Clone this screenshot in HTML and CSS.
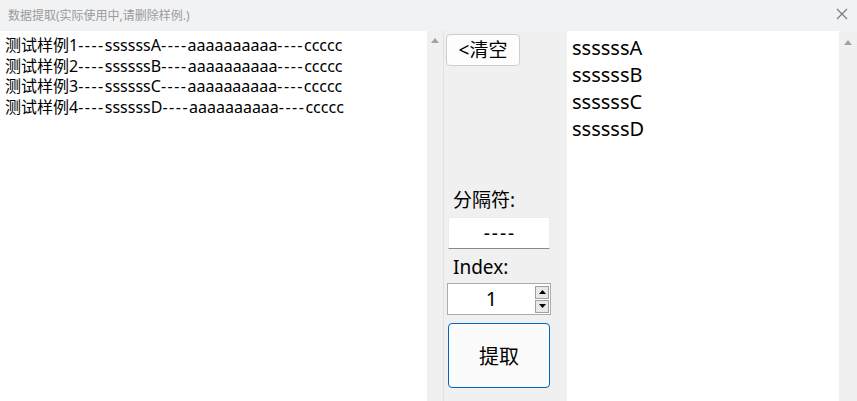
FILE: index.html
```html
<!DOCTYPE html>
<html lang="zh-CN">
<head>
<meta charset="utf-8">
<title>数据提取</title>
<link rel="stylesheet" href="styles.css">
</head>
<body>
<div class="window">
  <div class="titlebar">
    <span class="title">数据提取(实际使用中,请删除样例.)</span>
    <svg class="close" width="12" height="12" viewBox="0 0 12 12"><path d="M1 1 L11 11 M11 1 L1 11" stroke="#777" stroke-width="1.1" fill="none"/></svg>
  </div>
  <div class="content">
    <div class="textarea left">
      <div>测试样例1<span class="dash">----</span>ssssssA<span class="dash">----</span>aaaaaaaaaa<span class="dash">----</span>ccccc</div>
      <div>测试样例2<span class="dash">----</span>ssssssB<span class="dash">----</span>aaaaaaaaaa<span class="dash">----</span>ccccc</div>
      <div>测试样例3<span class="dash">----</span>ssssssC<span class="dash">----</span>aaaaaaaaaa<span class="dash">----</span>ccccc</div>
      <div>测试样例4<span class="dash">----</span>ssssssD<span class="dash">----</span>aaaaaaaaaa<span class="dash">----</span>ccccc</div>
    </div>
    <div class="scrollbar sb-left"><span class="arrow-up"></span></div>
    <div class="middle">
      <button class="btn clear">&lt;清空</button>
      <div class="label sep-label">分隔符:</div>
      <div class="input sep">----</div>
      <div class="label">Index:</div>
      <div class="numeric">
        <span class="num-value">1</span>
        <span class="spin">
          <span class="spin-btn"><svg width="7" height="4" viewBox="0 0 7 4"><path d="M0 4 L3.5 0 L7 4 Z" fill="#000"/></svg></span>
          <span class="spin-btn"><svg width="7" height="4" viewBox="0 0 7 4"><path d="M0 0 L3.5 4 L7 0 Z" fill="#000"/></svg></span>
        </span>
      </div>
      <button class="btn extract">提取</button>
    </div>
    <div class="textarea right">
      <div>ssssssA</div>
      <div>ssssssB</div>
      <div>ssssssC</div>
      <div>ssssssD</div>
    </div>
    <div class="scrollbar sb-right"><span class="arrow-up"></span></div>
  </div>
</div>
</body>
</html>
```

FILE: styles.css
```css
html, body {
  margin: 0;
  padding: 0;
}
body {
  width: 857px;
  height: 401px;
  overflow: hidden;
  font-family: "Noto Sans", "Noto Sans CJK SC", sans-serif;
  color: #000;
  background: #f0f0f0;
}
.window {
  display: flex;
  flex-direction: column;
  height: 401px;
}
.titlebar {
  height: 31px;
  flex: none;
  background: #f1f2f4;
  display: flex;
  align-items: center;
  justify-content: space-between;
  padding: 0 9px 0 8px;
  box-sizing: border-box;
}
.title {
  font-size: 12px;
  color: #9a9a9a;
  position: relative;
  top: -1px;
}
.close {
  display: block;
  position: relative;
  top: -2px;
}
.content {
  flex: 1;
  display: flex;
  min-height: 0;
}
.textarea {
  background: #fff;
  box-sizing: border-box;
  white-space: nowrap;
  overflow: hidden;
}
.left {
  width: 427px;
  flex: none;
  padding: 4px 0 0 5px;
  font-size: 16px;
  line-height: 20.7px;
}
.dash {
  letter-spacing: 1.5px;
}
.right {
  width: 272px;
  flex: none;
  padding: 3px 0 0 5px;
  font-size: 20px;
  line-height: 27px;
}
.scrollbar {
  background: #f0f0f0;
  flex: none;
  display: flex;
  justify-content: center;
  box-sizing: border-box;
}
.sb-left {
  width: 17px;
  border-right: 1px solid #e2e2e2;
}
.sb-right {
  width: 18px;
}
.arrow-up {
  width: 0;
  height: 0;
  margin-top: 7px;
  border-left: 4px solid transparent;
  border-right: 4px solid transparent;
  border-bottom: 5px solid #a3a3a3;
}
.sb-right .arrow-up {
  margin-top: 9px;
}
.middle {
  width: 123px;
  flex: none;
  background: #f0f0f0;
  display: flex;
  flex-direction: column;
  align-items: flex-start;
}
.btn {
  font-family: "Noto Sans", "Noto Sans CJK SC", sans-serif;
  color: #000;
  padding: 0;
  cursor: default;
}
.clear {
  margin: 3px 0 0 2px;
  width: 74px;
  height: 32px;
  font-size: 19px;
  line-height: 30px;
  background: #fdfdfd;
  border: 1px solid #cfcfcf;
  border-radius: 4px;
}
.label {
  margin-left: 9px;
  font-size: 19px;
  height: 26px;
  line-height: 26px;
}
.sep-label {
  margin-top: 121px;
}
.input {
  margin: 4px 0 0 4px;
  width: 102px;
  height: 32px;
  box-sizing: border-box;
  background: #fff;
  border: 1px solid #ececec;
  border-bottom: 1px solid #8a8a8a;
  text-align: center;
  font-size: 19px;
  line-height: 30px;
  letter-spacing: 2px;
  text-indent: 2px;
}
.sep + .label {
  margin-top: 5px;
}
.numeric {
  margin: 3px 0 0 3px;
  width: 104px;
  height: 32px;
  box-sizing: border-box;
  background: #fff;
  border: 1px solid #ababab;
  display: flex;
  align-items: center;
}
.num-value {
  flex: 1;
  text-align: center;
  font-size: 20px;
  line-height: 30px;
}
.spin {
  display: flex;
  flex-direction: column;
  gap: 1px;
  margin-right: 1px;
}
.spin-btn {
  width: 14px;
  height: 13px;
  box-sizing: border-box;
  border: 1px solid #a0a0a0;
  background: #e8e8e8;
  display: flex;
  align-items: center;
  justify-content: center;
}
.spin-btn svg {
  display: block;
}
.extract {
  margin: 8px 0 0 4px;
  width: 102px;
  height: 65px;
  font-size: 20px;
  background: #fbfbfb;
  border: 1px solid #0067c0;
  border-radius: 4px;
}
```
